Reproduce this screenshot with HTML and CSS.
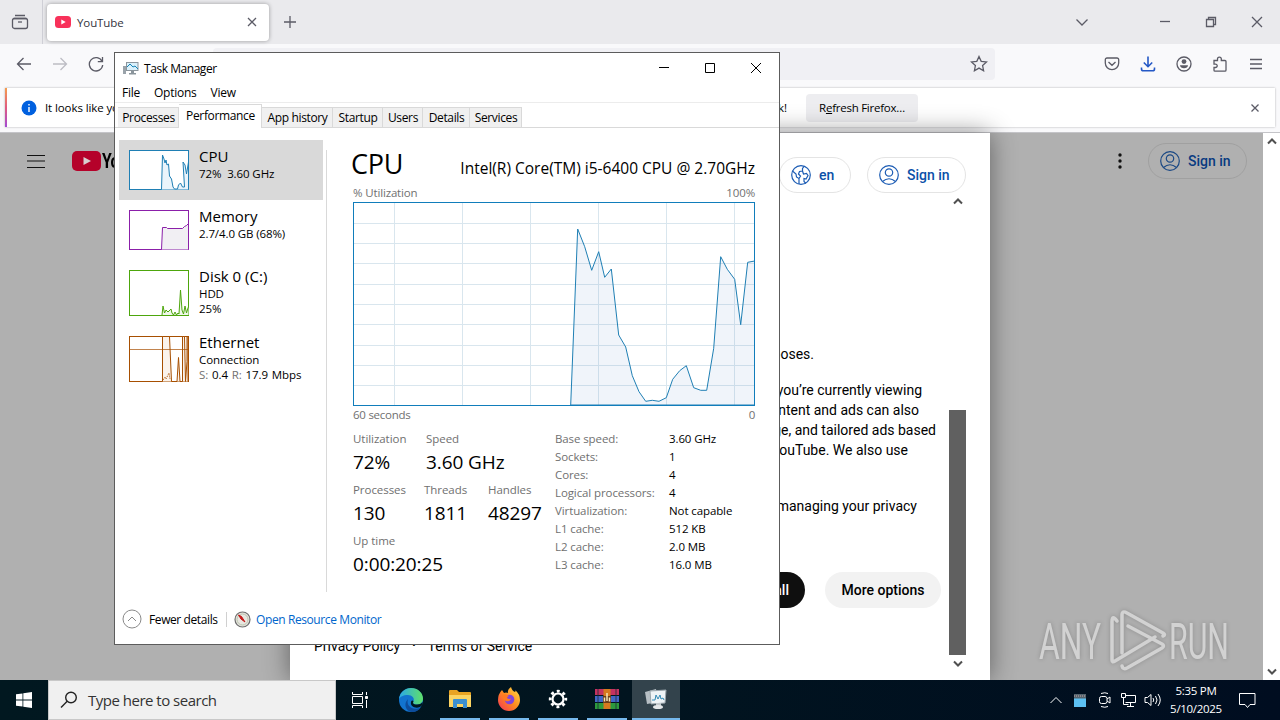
FILE: index.html
```html
<!DOCTYPE html>
<html lang="en">
<head>
    <meta charset="UTF-8">
    <meta name="viewport" content="width=device-width, initial-scale=1.0">
    <title>Desktop</title>
    <link rel="stylesheet" href="styles.css">
</head>
<body>
    <div class="desktop">
        <!-- Firefox -->
        <div class="browser">
            <div class="tab-strip">
                <div class="firefox-view">
                    <svg width="18" height="18" viewBox="0 0 18 18"><path d="M4 2.500h10M2.500 5.500h13" /><rect x="1.500" y="5.500" width="15" height="10" rx="2" /><path d="M7 9h4" /></svg>
                </div>
                <div class="tab">
                    <svg class="yt-icon" width="16" height="12" viewBox="0 0 16 12"><rect width="16" height="12" rx="3.500" fill="#f8315a" /><path d="M6.300 3.500v5l4.400-2.500z" fill="#fff" /></svg>
                    <span class="tab-title">YouTube</span>
                    <svg width="10" height="10" viewBox="0 0 10 10"><path d="M1 1l8 8M9 1l-8 8" /></svg>
                </div>
                <svg class="new-tab" width="14" height="14" viewBox="0 0 14 14"><path d="M7 1v12M1 7h12" /></svg>
                <div class="strip-right">
                    <svg class="list-tabs" width="14" height="14" viewBox="0 0 14 14"><path d="M1.500 4.500L7 10l5.500-5.500" /></svg>
                    <svg width="12" height="12" viewBox="0 0 12 12"><path d="M1 5.500h10" /></svg>
                    <svg width="12" height="12" viewBox="0 0 12 12"><path d="M1.500 3.500h7v7h-7zM3.500 3.500v-2h7v7h-2" /></svg>
                    <svg width="12" height="12" viewBox="0 0 12 12"><path d="M1 1l10 10M11 1L1 11" /></svg>
                </div>
            </div>
            <div class="toolbar">
                <svg width="16" height="16" viewBox="0 0 16 16"><path d="M15 8H1.500M7.500 2l-6 6 6 6" /></svg>
                <svg class="disabled" width="16" height="16" viewBox="0 0 16 16"><path d="M1 8h13.500M8.500 2l6 6-6 6" /></svg>
                <svg width="16" height="16" viewBox="0 0 16 16"><path d="M14 5.200A6.700 6.700 0 1 0 14.700 9M14.500 1v4.700H9.800" /></svg>
                <div class="url-bar">
                    <svg width="18" height="18" viewBox="0 0 18 18"><path d="M9 1.500l2.200 4.800 5.300.6-3.900 3.600 1 5.200L9 13.100l-4.600 2.600 1-5.200L1.500 6.900l5.300-.6z" /></svg>
                </div>
                <div class="toolbar-right">
                    <svg width="16" height="16" viewBox="0 0 16 16"><path d="M3 2h10a1.700 1.700 0 0 1 1.700 1.700V7A6.700 6.700 0 0 1 1.300 7V3.700A1.700 1.700 0 0 1 3 2zM4.500 6L8 9.300 11.500 6" /></svg>
                    <svg class="download" width="16" height="16" viewBox="0 0 16 16"><path d="M8 .5v10M3.800 6.500L8 10.700l4.200-4.200M1.500 11.500V13q0 1.800 1.800 1.800h9.400q1.800 0 1.800-1.800v-1.500" /></svg>
                    <svg width="16" height="16" viewBox="0 0 16 16"><circle cx="8" cy="8" r="7" /><circle cx="8" cy="5.600" r="2.400" fill="#5b5b66" stroke="none" /><path d="M4 9.300h8c0 4-8 4-8 0z" fill="#5b5b66" stroke="none" /></svg>
                    <svg width="16" height="16" viewBox="0 0 16 16"><path d="M2 4.500h3.500V3a1.900 1.900 0 0 1 3.800 0v1.500H13q1 0 1 1V14q0 1.200-1 1.200H3q-1 0-1-1v-2.700h1.500a1.700 1.700 0 0 0 0-3.400H2z" /></svg>
                    <svg width="16" height="16" viewBox="0 0 16 16"><path d="M2 3.500h12M2 8h12M2 12.500h12" /></svg>
                </div>
            </div>
            <div class="notice-wrap">
                <div class="notice">
                    <svg width="16" height="16" viewBox="0 0 16 16"><circle cx="8" cy="8" r="7.500" fill="#0060df" /><path d="M8 7v5M8 4v1.500" stroke="#fff" stroke-width="1.400" /></svg>
                    <span class="notice-start">It looks like you</span>
                    <span class="notice-end">k!</span>
                    <button class="refresh">R<u>e</u>fresh Firefox…</button>
                    <svg class="notice-close" width="10" height="10" viewBox="0 0 10 10"><path d="M1.500 1.500l7 7M8.500 1.500l-7 7" /></svg>
                </div>
            </div>
            <div class="page">
                <div class="yt-left">
                    <svg width="20" height="16" viewBox="0 0 20 16"><path d="M1 2.500h18M1 8h18M1 14.500h18" stroke="#111" fill="none" /></svg>
                    <svg class="yt-logo" width="29" height="20" viewBox="0 0 29 20"><rect width="29" height="20" rx="5" fill="#b5022a" /><path d="M11.500 6v8l7.500-4z" fill="#d8d0d0" /></svg>
                    <span class="yt-word">YouTube</span>
                </div>
                <div class="consent">
                    <div class="consent-head">
                        <div class="pill pill-lang">
                            <svg width="20" height="20" viewBox="0 0 20 20"><circle cx="10" cy="10" r="9.300" /><path d="M1.500 6l3.500 3 .5 3 2.500 1.500V19M8 13.500l1.500-2.500L7.500 9l1-2.500 3-.5V3.500L13 1.500M11.500 6l1 3 3-.5 1.500 2-2 3.500-2-.5v3l2 2" /></svg>
                            en
                        </div>
                        <div class="pill pill-sign">
                            <svg width="20" height="20" viewBox="0 0 20 20"><circle cx="10" cy="10" r="9.300" /><circle cx="10" cy="7.500" r="3.700" /><path d="M3.500 16.500q6.500-5.500 13 0" /></svg>
                            Sign in
                        </div>
                    </div>
                    <div class="consent-main">
                        <div class="consent-text">
                            <p class="line w-purposes">poses.</p>
                            <p class="line w-viewing">you’re currently viewing</p>
                            <p class="line w-also">ntent and ads can also</p>
                            <p class="line w-based">ge, and tailored ads based</p>
                            <p class="line w-use">YouTube. We also use</p>
                            <p class="line w-privacy">managing your privacy</p>
                            <div class="consent-buttons">
                                <button class="btn btn-dark">all</button>
                                <button class="btn">More options</button>
                            </div>
                            <div class="consent-links"><span>Privacy Policy</span><span class="dot">•</span><span>Terms of Service</span></div>
                        </div>
                        <div class="inner-scroll">
                            <svg width="10" height="8" viewBox="0 0 10 8"><path d="M1 6.500l4-4 4 4" /></svg>
                            <div class="inner-thumb"></div>
                            <svg width="10" height="8" viewBox="0 0 10 8"><path d="M1 1.500l4 4 4-4" /></svg>
                        </div>
                    </div>
                </div>
                <div class="yt-right">
                    <div class="yt-actions">
                        <svg width="6" height="16" viewBox="0 0 6 16" fill="#111"><circle cx="3" cy="2" r="1.700" /><circle cx="3" cy="8" r="1.700" /><circle cx="3" cy="14" r="1.700" /></svg>
                        <div class="pill pill-sign pill-dim">
                            <svg width="20" height="20" viewBox="0 0 20 20"><circle cx="10" cy="10" r="9.300" /><circle cx="10" cy="7.500" r="3.700" /><path d="M3.500 16.500q6.500-5.500 13 0" /></svg>
                            Sign in
                        </div>
                    </div>
                    <svg class="watermark" width="196" height="66" viewBox="0 0 196 66">
                        <text x="2" y="50" textLength="62" lengthAdjust="spacingAndGlyphs">ANY</text>
                        <g fill="none" stroke="#d2d2d2" stroke-width="3.500" stroke-linejoin="round" stroke-linecap="round">
                            <path d="M80 12q-5-7-5 1v38q0 3 3 1l40-24" />
                            <path d="M85 44V6q0-5 5-2l36 20q3 2 0 3" />
                            <path d="M91 17l34 18q3 2 0 4L90 59q-4 2-5-2" />
                        </g>
                        <text x="132" y="50" textLength="60" lengthAdjust="spacingAndGlyphs">RUN</text>
                    </svg>
                </div>
                <div class="page-scroll">
                    <svg width="10" height="8" viewBox="0 0 10 8"><path d="M1 6.500l4-4 4 4" /></svg>
                    <svg width="10" height="8" viewBox="0 0 10 8"><path d="M1 1.500l4 4 4-4" /></svg>
                </div>
            </div>
        </div>

        <!-- Task Manager -->
        <div class="window">
            <div class="title-bar">
                <svg width="17" height="16" viewBox="0 0 17 16"><rect x="1" y="6" width="3" height="8" fill="#9aa3aa" /><rect x="4.500" y="2.500" width="11.500" height="8" fill="#d9f0fb" stroke="#8b959c" /><path d="M5 7l3-3 3 3 2-1 3 3" fill="none" stroke="#1683b5" /><path d="M9 11h3v2h2v1.500H7V13h2z" fill="#8b959c" /></svg>
                <span class="title">Task Manager</span>
                <div class="window-buttons">
                    <svg width="12" height="12" viewBox="0 0 12 12"><path d="M1 5.500h10" /></svg>
                    <svg width="12" height="12" viewBox="0 0 12 12"><path d="M1.500 1.500h9v9h-9z" /></svg>
                    <svg width="12" height="12" viewBox="0 0 12 12"><path d="M1 1l10 10M11 1L1 11" /></svg>
                </div>
            </div>
            <div class="menu"><span>File</span><span>Options</span><span>View</span></div>
            <div class="tabs">
                <span class="t-processes">Processes</span>
                <span class="t-performance active">Performance</span>
                <span class="t-history">App history</span>
                <span class="t-startup">Startup</span>
                <span class="t-users">Users</span>
                <span class="t-details">Details</span>
                <span class="t-services">Services</span>
            </div>
            <div class="content">
                <div class="sidebar">
                    <div class="item selected">
                        <svg width="60" height="40" viewBox="0 0 60 40" fill="#eaf4fb" stroke="#1f7fb4"><rect x=".5" y=".5" width="59" height="39" fill="#fff" /><path d="M32.500 39.500L33.500 5l1.500 4 1 4 1-3 1 5 1.500-1 1 12 2 3 1.500 8 1.500 2h3l1-4 2-2 2 4h2L54 12l2 3 1.500 9L59.500 12v27.500" /></svg>
                        <div class="item-text"><h4>CPU</h4><p>72%&nbsp; 3.60 GHz</p></div>
                    </div>
                    <div class="item">
                        <svg width="60" height="40" viewBox="0 0 60 40" fill="#f1eff3" stroke="#8b1fa9"><rect x=".5" y=".5" width="59" height="39" fill="#fff" /><path d="M32.500 39.500L33.500 17.500h4l1 1h15l2-2 2-1 2-2v26" /></svg>
                        <div class="item-text"><h4>Memory</h4><p>2.7/4.0 GB (68%)</p></div>
                    </div>
                    <div class="item tall">
                        <svg width="60" height="46" viewBox="0 0 60 46" fill="#eff7ea" stroke="#4da60c"><rect x=".5" y=".5" width="59" height="45" fill="#fff" /><path d="M33 45l1-9 1.500 7 1.500-3 2 2 3-3 1 4 1.500 2 1.500-3 1.500 3 1.500-2 1 1 1.500-24 1.500 20 1.500 4 1.500-8 1.500 7 1.500-5 1-2v9" /></svg>
                        <div class="item-text"><h4>Disk 0 (C:)</h4><p>HDD</p><p>25%</p></div>
                    </div>
                    <div class="item tall">
                        <svg width="60" height="46" viewBox="0 0 60 46" fill="#fbf3ec" stroke="#a74f01"><rect x=".5" y=".5" width="59" height="45" fill="#fff" /><path d="M33.500 45.500V.5h7l2 45M48 45.500l1.500-24 1.500 24M53.500 45.500V.5h2l1 45 1.500-20V.5h1v45" /><path d="M1 13.500h58" stroke-width=".7" /><path d="M34 44l2-3 1 2 3-6 1 6" stroke-dasharray="1 1" fill="none" /></svg>
                        <div class="item-text"><h4>Ethernet</h4><p>Connection</p><p class="rates"><i>S:</i> 0.4 <i>R:</i> 17.9 Mbps</p></div>
                    </div>
                </div>
                <div class="detail">
                    <div class="detail-head"><h1>CPU</h1><span class="model">Intel(R) Core(TM) i5-6400 CPU @ 2.70GHz</span></div>
                    <div class="axis"><span>% Utilization</span><span>100%</span></div>
                    <svg class="graph" width="402" height="204" viewBox="0 0 402 204">
                        <path class="grid" d="M41.500 0v204M109.500 0v204M177.500 0v204M245.500 0v204M313.500 0v204M381.500 0v204M0 21.500h402M0 41.500h402M0 61.500h402M0 82.500h402M0 102.500h402M0 122.500h402M0 143.500h402M0 163.500h402M0 183.500h402" />
                        <path class="usage" d="M217.700 203L224.700 27l7 17.700 7 23.600 7-18.600 6 25.600 6.600-8.300 7.400 66 7 12 6.600 28.700 6.700 16 6.700 9.600 6.600-1 6.700 1 7.300-3.600 6.400-18.400 7-8.600 6.600-5 7.400 22 7 2.600h6l7-42 7-91.600 6.600 12.600 7.400 10 6 45.400 7-62.400 7-1.300V203z" />
                        <rect class="frame" x=".5" y=".5" width="401" height="203" />
                    </svg>
                    <div class="axis axis-bottom"><span>60 seconds</span><span>0</span></div>
                    <div class="stats">
                        <div class="stats-left">
                            <div class="stat-row">
                                <div class="stat s-util"><label>Utilization</label><b>72%</b></div>
                                <div class="stat"><label>Speed</label><b>3.60 GHz</b></div>
                            </div>
                            <div class="stat-row">
                                <div class="stat s-proc"><label>Processes</label><b>130</b></div>
                                <div class="stat s-thr"><label>Threads</label><b>1811</b></div>
                                <div class="stat"><label>Handles</label><b>48297</b></div>
                            </div>
                            <div class="stat-row">
                                <div class="stat"><label>Up time</label><b>0:00:20:25</b></div>
                            </div>
                        </div>
                        <dl class="specs">
                            <dt>Base speed:</dt><dd>3.60 GHz</dd>
                            <dt>Sockets:</dt><dd>1</dd>
                            <dt>Cores:</dt><dd>4</dd>
                            <dt>Logical processors:</dt><dd>4</dd>
                            <dt>Virtualization:</dt><dd>Not capable</dd>
                            <dt>L1 cache:</dt><dd>512 KB</dd>
                            <dt>L2 cache:</dt><dd>2.0 MB</dd>
                            <dt>L3 cache:</dt><dd>16.0 MB</dd>
                        </dl>
                    </div>
                </div>
            </div>
            <div class="footer">
                <svg width="20" height="20" viewBox="0 0 20 20" fill="none" stroke="#8a8a8a"><circle cx="10" cy="10" r="9" /><path d="M6 12l4-4 4 4" /></svg>
                <span class="fewer">Fewer details</span>
                <svg class="gauge" width="17" height="17" viewBox="0 0 17 17"><circle cx="8.500" cy="8.500" r="7.500" fill="#e8e6e0" stroke="#6f6f6f" stroke-width="1.200" /><circle cx="8.500" cy="8.500" r="5.500" fill="none" stroke="#b9c4ae" /><path d="M4.500 4l3 1.500 3.500 5.500-4-3z" fill="#c51818" stroke="#c51818" /></svg>
                <a class="monitor">Open Resource Monitor</a>
            </div>
        </div>

        <!-- Taskbar -->
        <div class="taskbar">
            <div class="start"><svg width="16" height="16" viewBox="0 0 16 16" fill="#fff"><path d="M0 2.300L6.500 1.400v6.200H0zM7.300 1.300L16 0v7.600H7.300zM0 8.400h6.500v6.200L0 13.700zM7.300 8.400H16V16l-8.700-1.300z" /></svg></div>
            <div class="search">
                <svg width="18" height="18" viewBox="0 0 18 18"><circle cx="11" cy="6.500" r="5.300" /><path d="M7.200 10.300L1 16.500" /></svg>
                <span>Type here to search</span>
            </div>
            <div class="app"><svg width="18" height="16" viewBox="0 0 18 16" fill="none" stroke="#fff"><path d="M1.500 4.500h10v7h-10zM1.500 0v2.500h10V0M1.500 16v-2.500h10V16M15.500 0v3M15.500 8v8" /><path d="M14.500 4.500h2v2h-2z" fill="#fff" /></svg></div>
            <div class="app edge">
                <svg width="26" height="26" viewBox="0 0 26 26">
                    <defs>
                        <linearGradient id="edgeTop" x1="0" y1="0" x2="1" y2="0"><stop offset="0" stop-color="#2aa9e8" /><stop offset="1" stop-color="#5fe06a" /></linearGradient>
                    </defs>
                    <circle cx="13" cy="13" r="12" fill="#1274cf" />
                    <path d="M1 12C2 5 7 1 13 1c7 0 12 5 12 10.500 0 4-3 6-6 6-4 0-4.500-1.500-3.500-3C17 11 14 8 10 8c-5 0-8 2-9 4z" fill="url(#edgeTop)" />
                    <path d="M10 12c-2 6 3 11 10 9.500 1.500-.4 2.500-1 3-1.500-2 4-6 5.500-10 5-5-1-8-8-3-13z" fill="#0d4d9c" />
                    <path d="M15.500 14.500c-1 1.500-.5 3 3.500 3 2.500 0 4.500-.8 5.500-2.500v3l-2.500 2c-5 2-10-1-9-5 .5-2 2-2 2.500-.5z" fill="#011820" />
                </svg>
            </div>
            <div class="app running">
                <svg width="22" height="20" viewBox="0 0 22 20"><path d="M0 2q0-1 1-1h7l2 2h11q1 0 1 1v14H0z" fill="#e9a423" /><path d="M0 6h22v12H0z" fill="#fcd462" /><path d="M4 11q0-1 1-1h12q1 0 1 1v8h-4v-4H8v4H4z" fill="#3b8fd0" /></svg>
            </div>
            <div class="app running">
                <svg width="24" height="24" viewBox="0 0 24 24">
                    <defs>
                        <linearGradient id="fox" x1="1" y1="0" x2="0" y2="1"><stop offset="0" stop-color="#ffe14a" /><stop offset=".5" stop-color="#ff8a1e" /><stop offset="1" stop-color="#f0305c" /></linearGradient>
                    </defs>
                    <path d="M5 3l2 3q2-1 4 0-1-3 3-6 1 4 4 5 1-1 0-2 5 4 5 10A11 11 0 0 1 1 13Q1 7 5 3z" fill="url(#fox)" />
                    <circle cx="12.500" cy="12.500" r="4.800" fill="#8045d9" />
                    <path d="M5 8q4-2 7 1-2 .5-2 2 2 1.500 4 .5-1 3.500-5 2.500-4-1-4-6z" fill="#ff7a22" />
                </svg>
            </div>
            <div class="app running">
                <svg width="20" height="20" viewBox="0 0 20 20" fill="none" stroke="#fff"><circle cx="10" cy="10" r="5.500" stroke-width="2.200" /><circle cx="10" cy="10" r="7.800" stroke-width="2.800" stroke-dasharray="2.900 3.226" stroke-dashoffset="1.450" /></svg>
            </div>
            <div class="app running">
                <svg width="24" height="22" viewBox="0 0 24 22"><path d="M0 1h24v6H0z" fill="#c43260" /><path d="M0 8h24v6H0z" fill="#4166c5" /><path d="M0 15h24v6H0z" fill="#2c9a3c" /><path d="M3 1v20M21 1v20" stroke="#1c2a3a" stroke-width=".8" /><path d="M8.500 1h7v20h-7z" fill="#d77a1e" /><path d="M8 8h8v7H8z" fill="#6b3d18" /><path d="M9.500 9.500v4M14.500 9.500v4M12 5v8" stroke="#f5e6b8" stroke-width="1.500" /></svg>
            </div>
            <div class="app running current">
                <svg width="24" height="22" viewBox="0 0 24 22"><path d="M1 4l11-3 2 13-11 2z" fill="#b7bfc4" /><path d="M6 3l16-1-1 13-14 1z" fill="#eef3f6" stroke="#9aa5ac" /><path d="M8 12h3l1-5 2 4 2-4 1 4 2-1 1 2" fill="none" stroke="#3289b4" /><path d="M12 15h5v3h-5z" fill="#c2c8cc" /><ellipse cx="14" cy="19" rx="5" ry="2" fill="#e4e7e9" /></svg>
            </div>
            <div class="tray">
                <svg width="14" height="10" viewBox="0 0 14 10"><path d="M1.500 8L7 2.500 12.500 8" /></svg>
                <svg class="tray-app" width="12" height="13" viewBox="0 0 12 13"><rect width="12" height="13" fill="#5cc0f2" stroke="none" /><rect width="12" height="4.500" fill="#54646e" stroke="none" /><path d="M0 2h12" stroke="#c8a5a5" stroke-dasharray="1 1" /></svg>
                <svg class="tray-meet" width="14" height="16" viewBox="0 0 14 16"><rect x="1.500" y="4.500" width="7.500" height="7" rx="2" /><path d="M9 7l3-2v6L9 9M3 1.500q4-1.500 7 0M3 14.500q4 1.500 7 0" /></svg>
                <svg class="tray-net" width="17" height="14" viewBox="0 0 17 14"><path d="M5.500 2.500h10v7h-10M1.500.5h4v4h-4zM3.500 4.500v7h5M10.500 9.500v4M7 13.500h7" /></svg>
                <svg class="tray-sound" width="17" height="14" viewBox="0 0 17 14"><path d="M1 4.500h2.500L7 1.500v11L3.500 9.500H1zM9 5q1.500 2 0 4M11.500 3q3 4 0 8M14 1q4.500 6 0 12" /></svg>
                <div class="clock"><span>5:35 PM</span><span>5/10/2025</span></div>
                <svg class="tray-note" width="17" height="17" viewBox="0 0 17 17"><path d="M.5 1.500h15.500v11h-5l-2.500 3-2.500-3H.5z" /></svg>
            </div>
        </div>
    </div>
</body>
</html>
```
FILE: styles.css
```css
* {
    box-sizing: border-box;
}

body {
    margin: 0;
    font-family: "Open Sans", "Noto Sans", sans-serif;
    font-size: 12px;
    color: #000;
}

h1, h4, p, dl, dd {
    margin: 0;
    font-weight: 400;
}

svg {
    display: block;
    flex: none;
}

button {
    border: 0;
    font-family: inherit;
    color: inherit;
}

.desktop {
    position: relative;
    display: flex;
    flex-direction: column;
    width: 1280px;
    height: 720px;
    overflow: hidden;
    white-space: nowrap;
}

/* browser */
.browser {
    display: flex;
    flex-direction: column;
    height: 680px;
    background: #f9f9fb;
}

.tab-strip {
    display: flex;
    align-items: center;
    height: 44px;
    background: #eaeaed;
}

.tab-strip svg, .toolbar svg, .notice-close {
    fill: none;
    stroke: #5b5b66;
    stroke-width: 1.3;
}

.firefox-view {
    display: flex;
    align-items: center;
    width: 43px;
    height: 44px;
    padding-left: 11px;
    border-right: 1px solid #cfcfd6;
}

.tab {
    display: flex;
    align-items: center;
    width: 222px;
    height: 37px;
    margin-left: 4px;
    padding: 0 12px 0 8px;
    border-radius: 4px;
    background: #fff;
    box-shadow: 0 0 4px rgba(0, 0, 0, 0.35);
}

.tab .yt-icon {
    stroke: none;
}

.tab-title {
    flex: 1;
    margin-left: 6px;
    font-size: 11.5px;
    letter-spacing: -0.1px;
    color: #33333c;
}

.new-tab {
    margin-left: 14px;
}

.strip-right {
    display: flex;
    align-items: center;
    margin-left: auto;
    padding-right: 17px;
    gap: 34px;
}

.strip-right .list-tabs {
    margin-right: 36px;
}

.toolbar {
    display: flex;
    align-items: center;
    height: 44px;
    padding: 0 16px 4px;
    gap: 20px;
}

.toolbar .disabled {
    stroke: #bdbdc4;
}

.url-bar {
    display: flex;
    align-items: center;
    justify-content: flex-end;
    width: 782px;
    height: 32px;
    margin-left: 89px;
    padding-right: 7px;
    border-radius: 4px;
    background: #f0f0f4;
}

.toolbar-right {
    display: flex;
    margin-left: auto;
    gap: 20px;
}

.toolbar .download {
    stroke: #2458c6;
    stroke-width: 1.6;
}

.notice-wrap {
    height: 45px;
    padding: 0 5px 5px;
    border-bottom: 1px solid #c4c4c8;
}

.notice {
    display: flex;
    align-items: center;
    height: 39px;
    padding-left: 14px;
    border-left: 2px solid;
    border-image: linear-gradient(#f5a04c, #e05a80, #a04ad8) 1;
    background: #fff;
    box-shadow: 0 0 2px rgba(0, 0, 0, 0.3);
    font-size: 11.5px;
    letter-spacing: -0.1px;
}

.notice-start {
    width: 718px;
    margin-left: 8px;
}

.notice-end {
    width: 24px;
    margin-left: 15px;
}

.refresh {
    width: 112px;
    height: 28px;
    margin-left: 4px;
    padding: 0;
    border-radius: 4px;
    background: #ededf0;
    font-size: 11.5px;
    letter-spacing: -0.25px;
}

.notice-close {
    margin: 0 15px 0 auto;
}

/* youtube page */
.page {
    display: flex;
    flex: 1;
    height: 547px;
    background: #b0b0b0;
    font-family: Roboto, sans-serif;
}

.yt-left {
    display: flex;
    align-items: flex-start;
    width: 290px;
    padding: 18px 0 0 26px;
}

.yt-left svg {
    margin-top: 2px;
}

.yt-left .yt-logo {
    margin: 0 1px 0 26px;
}

.yt-word {
    font-size: 21px;
    font-weight: 700;
    line-height: 21px;
    letter-spacing: -1px;
    transform: scaleX(0.75);
    transform-origin: left;
}

.consent {
    display: flex;
    flex-direction: column;
    width: 700px;
    background: #fff;
    box-shadow: 0 0 24px rgba(0, 0, 0, 0.45);
}

.consent-head {
    display: flex;
    justify-content: flex-end;
    height: 63px;
    padding: 24px 24px 0;
    gap: 16px;
}

.pill {
    display: flex;
    align-items: center;
    height: 36px;
    padding-left: 11px;
    border: 1px solid #e4e4e4;
    border-radius: 18px;
    gap: 8px;
    font-size: 14px;
    font-weight: 500;
    color: #0a50a8;
}

.pill svg {
    fill: none;
    stroke: #1c5cb4;
    stroke-width: 1.2;
}

.pill-lang {
    width: 72px;
}

.pill-sign {
    width: 99px;
}

.pill-dim {
    border-color: #a0a0a0;
    color: #083a80;
}

.pill-dim svg {
    stroke: #1a4884;
}

.consent-main {
    display: flex;
    flex: 1;
    padding-right: 24px;
}

.consent-text {
    width: 659px;
    padding-top: 148px;
}

.line {
    font-size: 14px;
    line-height: 20px;
    text-align: right;
}

.w-purposes {
    width: 524px;
    margin-bottom: 16px;
}

.w-viewing {
    width: 632px;
}

.w-also {
    width: 629px;
}

.w-based {
    width: 646px;
}

.w-use {
    width: 618px;
    margin-bottom: 36px;
}

.w-privacy {
    width: 627px;
}

.consent-buttons {
    display: flex;
    justify-content: flex-end;
    margin-top: 56px;
    padding-right: 8px;
    gap: 20px;
}

.btn {
    width: 116px;
    height: 36px;
    padding: 0;
    border-radius: 18px;
    background: #f2f2f2;
    font-size: 14px;
    font-weight: 500;
}

.btn-dark {
    padding-right: 16px;
    background: #0f0f0f;
    color: #fff;
    text-align: right;
}

.consent-links {
    display: flex;
    margin-top: 28px;
    padding-left: 24px;
    font-size: 14px;
    line-height: 20px;
}

.dot {
    margin: 0 12px;
    font-size: 10px;
}

.inner-scroll {
    display: flex;
    flex-direction: column;
    align-items: center;
    width: 17px;
    padding: 1px 0 12px;
}

.inner-scroll svg, .page-scroll svg {
    fill: none;
    stroke: #505050;
    stroke-width: 2;
}

.inner-thumb {
    width: 17px;
    height: 245px;
    margin: auto 0 5px;
    background: #606060;
}

.yt-right {
    display: flex;
    flex: 1;
    flex-direction: column;
    justify-content: space-between;
    align-items: flex-end;
    padding: 10px 16px 5px 0;
}

.yt-actions {
    display: flex;
    align-items: center;
    gap: 25px;
}

.watermark {
    overflow: visible;
    margin-right: 14px;
    font-family: Roboto, sans-serif;
    font-size: 50px;
    fill: #d2d2d2;
    filter: drop-shadow(0 0 2px rgba(0, 0, 0, 0.2));
}

.page-scroll {
    display: flex;
    flex-direction: column;
    justify-content: space-between;
    align-items: center;
    width: 17px;
    padding: 4px 0;
    background: #fff;
}

/* task manager */
.window {
    position: absolute;
    top: 52px;
    left: 114px;
    display: flex;
    flex-direction: column;
    width: 666px;
    height: 593px;
    border: 1px solid #5c5c5c;
    background: #fff;
    letter-spacing: -0.25px;
}

.title-bar {
    display: flex;
    align-items: center;
    height: 30px;
    padding: 0 17px 0 7px;
}

.title {
    margin-left: 5px;
    letter-spacing: -0.45px;
}

.window-buttons {
    display: flex;
    margin: -1px 0 0 auto;
    gap: 34px;
    fill: none;
    stroke: #000;
}

.menu {
    display: flex;
    height: 20px;
    padding-left: 7px;
    border-bottom: 1px solid #ececec;
    gap: 14px;
    line-height: 19px;
}

.tabs {
    display: flex;
    align-items: flex-end;
    height: 25px;
    border-bottom: 1px solid #d9d9d9;
    padding-left: 3px;
    letter-spacing: -0.35px;
}

.tabs span {
    height: 20px;
    padding-left: 1px;
    border: 1px solid #d9d9d9;
    border-bottom: 0;
    border-left-width: 0;
    background: #f0f0f0;
    line-height: 20px;
    text-align: center;
}

.tabs .active {
    height: 24px;
    margin-bottom: -1px;
    background: #fff;
    line-height: 22px;
}

.t-processes {
    width: 61px;
}

.t-performance {
    width: 83px;
}

.t-history {
    width: 71px;
}

.t-startup {
    width: 50px;
}

.t-users {
    width: 40px;
}

.t-details {
    width: 47px;
}

.t-services {
    width: 52px;
}

.content {
    display: flex;
    height: 464px;
    padding: 12px 24px 0 4px;
}

.sidebar {
    width: 204px;
}

.item {
    display: flex;
    height: 60px;
    padding: 10px;
    gap: 10px;
}

.item.tall {
    height: 66px;
}

.item.selected {
    background: #d9d9d9;
}

.item h4 {
    margin-top: -3px;
    font-size: 15px;
    line-height: 19px;
    letter-spacing: 0;
}

.item p {
    font-size: 11.5px;
    line-height: 15px;
    letter-spacing: -0.1px;
}

.item .rates {
    word-spacing: 1px;
}

.item i {
    font-style: normal;
    color: #707070;
}

.detail {
    width: 429px;
    margin: 10px 0 0 3px;
    padding-left: 26px;
    border-left: 1px solid #d9d9d9;
}

.detail-head {
    display: flex;
    justify-content: space-between;
    height: 36px;
}

.detail-head h1 {
    margin: -5px 0 0 -2px;
    font-size: 27px;
    line-height: 38px;
    letter-spacing: -0.2px;
}

.model {
    margin-top: 7px;
    font-size: 15.5px;
    line-height: 22px;
    letter-spacing: 0;
}

.axis {
    display: flex;
    justify-content: space-between;
    height: 16px;
    font-size: 11.5px;
    line-height: 14px;
    letter-spacing: -0.15px;
    color: #707070;
}

.axis-bottom {
    line-height: 17px;
    letter-spacing: -0.25px;
}

.graph {
    fill: none;
}

.graph .grid {
    stroke: #d9e6ee;
}

.graph .usage {
    fill: rgba(60, 120, 190, 0.08);
    stroke: #1f7fb4;
}

.graph .frame {
    stroke: #117dbb;
}

.stats {
    display: flex;
    padding-top: 9px;
}

.stats-left {
    width: 202px;
}

.stat-row {
    display: flex;
    height: 51px;
}

.stat label {
    display: block;
    font-size: 11.5px;
    line-height: 16px;
    letter-spacing: -0.05px;
    color: #707070;
}

.stat b {
    display: block;
    font-size: 19px;
    font-weight: 400;
    line-height: 30px;
    letter-spacing: -0.1px;
}

.s-util {
    width: 73px;
}

.s-proc {
    width: 71px;
}

.s-thr {
    width: 64px;
}

.specs {
    display: grid;
    grid-template-columns: 114px auto;
    grid-auto-rows: 18px;
    font-size: 11.5px;
    line-height: 16px;
    letter-spacing: -0.1px;
}

.specs dt {
    color: #707070;
}

.footer {
    display: flex;
    align-items: center;
    height: 52px;
    padding: 2px 0 0 7px;
    letter-spacing: -0.4px;
}

.fewer {
    width: 77px;
    margin-left: 7px;
    box-sizing: content-box;
    border-right: 1px solid #d0d0d0;
    line-height: 15px;
}

.gauge {
    margin: 0 5px 0 7px;
}

.monitor {
    color: #0066cc;
}

/* taskbar */
.taskbar {
    display: flex;
    height: 40px;
    background: linear-gradient(90deg, #011820, #01141f 50%, #000d20);
}

.start, .app {
    display: flex;
    justify-content: center;
    align-items: center;
    width: 48px;
    height: 40px;
}

.search {
    display: flex;
    align-items: center;
    width: 288px;
    padding-left: 11px;
    border: 1px solid #c8c8c8;
    background: #f0f0f0;
    gap: 10px;
    font-size: 15px;
    letter-spacing: -0.5px;
    color: #333;
}

.search svg {
    fill: none;
    stroke: #222;
    stroke-width: 1.4;
}

.app.edge {
    width: 54px;
    margin-right: 2px;
}

.app.running {
    width: 40px;
    margin-right: 9px;
    border-bottom: 2px solid #76b9ed;
}

.app.running.current {
    width: 48px;
    margin: 0 0 0 -4px;
    background: #33434c;
}

.tray {
    display: flex;
    align-items: center;
    margin-left: auto;
    padding-right: 24px;
    fill: none;
    stroke: #fff;
    color: #fff;
}

.tray-app {
    margin-left: 11px;
}

.tray-meet {
    margin-left: 12px;
}

.tray-net {
    margin-left: 8px;
}

.tray-sound {
    margin-left: 7px;
}

.clock {
    display: flex;
    flex-direction: column;
    align-items: center;
    width: 70px;
    font-size: 11.5px;
    line-height: 18px;
    letter-spacing: -0.3px;
}

.tray-note {
    margin-left: 8px;
}
```
